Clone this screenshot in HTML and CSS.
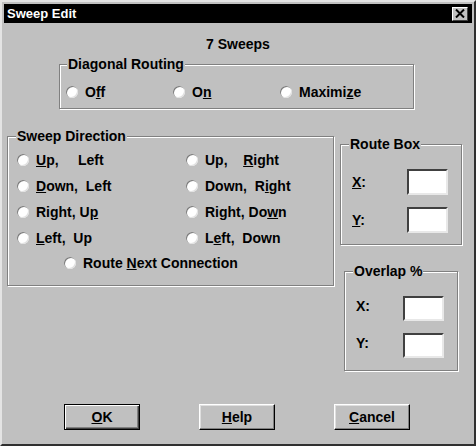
FILE: index.html
```html
<!DOCTYPE html>
<html lang="en">
<head>
    <meta charset="UTF-8">
    <meta name="viewport" content="width=device-width, initial-scale=1.0">
    <title>Sweep Edit</title>
    <link rel="stylesheet" href="styles.css">
</head>
<body>
    <div class="window">
        <div class="titlebar">
            <span class="title">Sweep Edit</span>
            <span class="close-btn">
                <svg width="10" height="9" viewBox="0 0 10 9">
                    <path d="M1 0.5 L9 8.5 M9 0.5 L1 8.5" stroke="#000" stroke-width="2" fill="none"/>
                </svg>
            </span>
        </div>
        <div class="dialog">
            <div class="count">7 Sweeps</div>

            <div class="group diagonal">
                <span class="group-title">Diagonal Routing</span>
                <div class="diag-options">
                    <label class="radio"><span class="radio-dot"></span><span>O<u>f</u>f</span></label>
                    <label class="radio"><span class="radio-dot"></span><span>O<u>n</u></span></label>
                    <label class="radio"><span class="radio-dot"></span><span>Maximi<u>z</u>e</span></label>
                </div>
            </div>

            <div class="middle">
                <div class="group sweep">
                    <span class="group-title">Sweep Direction</span>
                    <div class="sweep-grid">
                        <label class="radio"><span class="radio-dot"></span><span><u>U</u>p,&nbsp;&nbsp;&nbsp;&nbsp; Left</span></label>
                        <label class="radio"><span class="radio-dot"></span><span>Up,&nbsp;&nbsp;&nbsp; <u>R</u>ight</span></label>
                        <label class="radio"><span class="radio-dot"></span><span><u>D</u>own,&nbsp; Left</span></label>
                        <label class="radio"><span class="radio-dot"></span><span>Down,&nbsp; R<u>i</u>ght</span></label>
                        <label class="radio"><span class="radio-dot"></span><span>Right, U<u>p</u></span></label>
                        <label class="radio"><span class="radio-dot"></span><span>Right, Do<u>w</u>n</span></label>
                        <label class="radio"><span class="radio-dot"></span><span><u>L</u>eft,&nbsp; Up</span></label>
                        <label class="radio"><span class="radio-dot"></span><span>L<u>e</u>ft,&nbsp; Down</span></label>
                    </div>
                    <label class="radio next-conn"><span class="radio-dot"></span><span>Route <u>N</u>ext Connection</span></label>
                </div>

                <div class="side">
                    <div class="group route-box">
                        <span class="group-title">Route Box</span>
                        <div class="field">
                            <span class="field-label"><u>X</u>:</span>
                            <input class="text-input" type="text">
                        </div>
                        <div class="field">
                            <span class="field-label"><u>Y</u>:</span>
                            <input class="text-input" type="text">
                        </div>
                    </div>
                    <div class="group overlap">
                        <span class="group-title">Overlap %</span>
                        <div class="field">
                            <span class="field-label">X:</span>
                            <input class="text-input" type="text">
                        </div>
                        <div class="field">
                            <span class="field-label">Y:</span>
                            <input class="text-input" type="text">
                        </div>
                    </div>
                </div>
            </div>

            <div class="buttons">
                <button class="btn btn-default"><u>O</u>K</button>
                <button class="btn"><u>H</u>elp</button>
                <button class="btn"><u>C</u>ancel</button>
            </div>
        </div>
    </div>
</body>
</html>
```

FILE: styles.css
```css
body, html {
    margin: 0;
    padding: 0;
    background-color: #c0c0c0;
    font-family: "Liberation Sans", Arial, sans-serif;
    font-weight: bold;
    font-size: 14px;
    color: #000;
}
.window {
    width: 476px;
    height: 446px;
    box-sizing: border-box;
    padding: 2px;
    border: 2px solid;
    border-color: #e4e4e4 #303030 #303030 #e4e4e4;
    background-color: #c0c0c0;
}
.titlebar {
    height: 19px;
    background-color: #000;
    color: #fff;
    display: flex;
    align-items: center;
    justify-content: space-between;
    padding: 0 4px 0 3px;
    font-size: 13px;
}
.close-btn {
    width: 16px;
    height: 14px;
    box-sizing: border-box;
    background-color: #c0c0c0;
    border: 1px solid;
    border-color: #fff #404040 #404040 #fff;
    display: flex;
    align-items: center;
    justify-content: center;
}
.count {
    margin-top: 13px;
    text-align: center;
    line-height: 16px;
}
.group {
    position: relative;
    box-sizing: border-box;
    border: 1px solid #808080;
    box-shadow: inset 1px 1px 0 #fff, 1px 1px 0 #fff;
}
.group-title {
    position: absolute;
    top: -9px;
    left: 8px;
    padding: 0 1px;
    line-height: 16px;
    background-color: #c0c0c0;
}
.diagonal .group-title {
    left: 7px;
}
.radio {
    display: flex;
    align-items: center;
    gap: 7px;
    height: 16px;
    line-height: 16px;
    white-space: nowrap;
}
.radio-dot {
    flex: none;
    width: 12px;
    height: 12px;
    border-radius: 50%;
    background-color: #fff;
    box-shadow: inset 1px 1px 0 #7a7a7a, inset -1px -1px 0 #e0e0e0;
}
.diagonal {
    margin: 12px 0 0 55px;
    width: 355px;
    height: 45px;
    padding: 19px 0 0 6px;
}
.diag-options {
    display: flex;
}
.diag-options .radio {
    width: 107px;
}
.middle {
    display: flex;
    align-items: flex-start;
    margin-top: 27px;
}
.sweep {
    margin-left: 3px;
    width: 327px;
    height: 150px;
    padding: 15px 0 0 9px;
}
.sweep-grid {
    display: grid;
    grid-template-columns: 169px auto;
    row-gap: 10px;
}
.next-conn {
    margin: 9px 0 0 47px;
}
.side {
    display: flex;
    flex-direction: column;
    align-items: flex-start;
    margin: 8px 0 0 6px;
}
.route-box {
    width: 122px;
    height: 101px;
    padding: 24px 0 0 11px;
}
.overlap {
    margin: 26px 0 0 4px;
    width: 114px;
    height: 100px;
    padding: 24px 0 0 11px;
}
.field {
    display: flex;
    align-items: center;
    margin-bottom: 12px;
}
.field-label {
    width: 55px;
}
.overlap .field-label {
    width: 47px;
    padding-bottom: 6px;
}
.text-input {
    width: 41px;
    height: 26px;
    box-sizing: border-box;
    margin: 0;
    padding: 0;
    background-color: #fff;
    border: 2px solid;
    border-color: #404040 #e8e8e8 #e8e8e8 #404040;
}
.overlap .text-input {
    height: 25px;
}
.buttons {
    display: flex;
    gap: 59px;
    margin-top: 33px;
    padding-left: 60px;
}
.btn {
    width: 76px;
    height: 26px;
    box-sizing: border-box;
    padding: 0;
    font-family: inherit;
    font-weight: bold;
    font-size: 14px;
    color: #000;
    background-color: #c0c0c0;
    border: 1px solid;
    border-color: #fff #000 #000 #fff;
    box-shadow: inset -1px -1px 0 #808080, inset 1px 1px 0 #dfdfdf;
}
.btn-default {
    border-color: #000;
    box-shadow: inset 1px 1px 0 #fff, inset -1px -1px 0 #404040, inset -2px -2px 0 #808080;
}
```
